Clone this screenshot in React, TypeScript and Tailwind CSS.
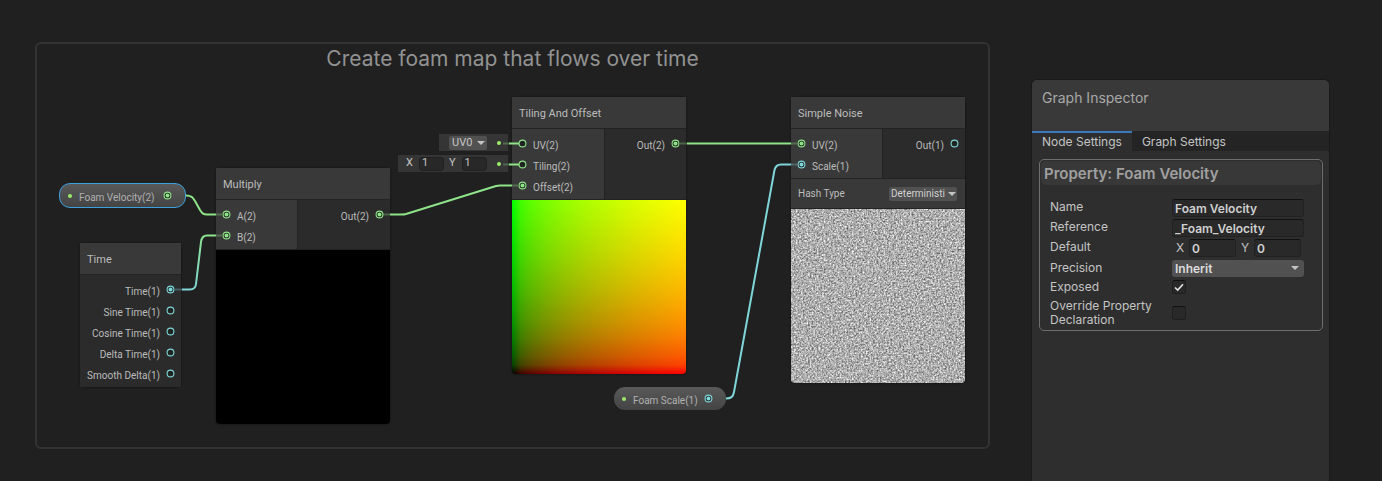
import React from "react";

type Kind = "vec" | "float";

interface PortProps {
  kind: Kind;
  connected?: boolean;
}

interface Slot {
  label: string;
  kind: Kind;
  connected?: boolean;
}

const portColor: Record<Kind, string> = {
  vec: "text-[#8fe388]",
  float: "text-[#7fd6d9]",
};

const timeOutputs: Slot[] = [
  { label: "Time(1)", kind: "float", connected: true },
  { label: "Sine Time(1)", kind: "float" },
  { label: "Cosine Time(1)", kind: "float" },
  { label: "Delta Time(1)", kind: "float" },
  { label: "Smooth Delta(1)", kind: "float" },
];

const edges = [
  { d: "M186 195.500C192 195.500 193 198 195 201L200 210C202 213 203 214.500 207 214.500H216", stroke: "#8fe388" },
  { d: "M182 289.500H190C194 289.500 195.500 288 196 284L201 242C201.500 238 203 235.500 207 235.500H216", stroke: "url(#edge-time)" },
  { d: "M390 214.500H402Q404 214.500 406 214L496 186Q498 185.500 500 185.500H512", stroke: "#8fe388" },
  { d: "M687 143.500H791", stroke: "#8fe388" },
  { d: "M726 398.500C731 398.500 733 397 734 392L774.500 170C775.500 166 777 164.500 781 164.500H791", stroke: "#7fd6d9" },
  { d: "M509 143.500H519M509 164.500H519", stroke: "#8fe388" },
];

const fadedEdges = [
  { d: "M216 214.500H222M216 235.500H222M383 214.500H390M512 185.500H518M680 143.500H687M791 143.500H797M503 143.500H509M503 164.500H509", stroke: "#8fe388" },
  { d: "M175 289.500H182M791 164.500H797", stroke: "#7fd6d9" },
];

const Port: React.FC<PortProps> = ({ kind, connected }) => (
  <svg className={`w-[9px] h-[9px] shrink-0 ${portColor[kind]}`} viewBox="0 0 9 9">
    <circle cx="4.5" cy="4.5" r="3.4" fill="#1f2420" stroke="currentColor" strokeWidth="1.1" />
    {connected && <circle cx="4.5" cy="4.5" r="2" fill="currentColor" />}
  </svg>
);

const Dot = () => <span className="w-1 h-1 shrink-0 rounded-full bg-[#9bec6a]" />;

const Caret = () => (
  <svg className="w-2 h-1 shrink-0 pointer-events-none" viewBox="0 0 8 4">
    <path d="M0 0h8L4 4z" fill="#c4c4c4" />
  </svg>
);

const InputSlot: React.FC<{ slot: Slot }> = ({ slot }) => (
  <li className="flex items-center gap-[6px] h-[21px] pl-[6px]">
    <Port kind={slot.kind} connected={slot.connected} />
    <span className="pt-1">{slot.label}</span>
  </li>
);

const OutputSlot: React.FC<{ slot: Slot }> = ({ slot }) => (
  <li className="flex items-center justify-end gap-[6px] h-[21px] pr-[6px] whitespace-nowrap">
    <span className="pt-1">{slot.label}</span>
    <Port kind={slot.kind} connected={slot.connected} />
  </li>
);

interface NodeProps {
  title: string;
  place: string;
  inputs?: Slot[];
  inputsWidth?: string;
  outputs: Slot[];
  children?: React.ReactNode;
}

const GraphNode: React.FC<NodeProps> = ({ title, place, inputs, inputsWidth, outputs, children }) => (
  <section className={`absolute flex flex-col gap-px bg-[#232323] text-[#bcbcbc] text-[10px] leading-[14px] rounded-sm shadow-[0_0_1px_1px_#1a1a1a] ${place}`}>
    <h2 className="h-[31px] px-[7px] bg-[#393939] text-[11px] leading-[34px]">{title}</h2>
    <div className="flex gap-px">
      {inputs && (
        <ul className={`pt-1 pb-[3px] bg-[#393939] ${inputsWidth}`}>
          {inputs.map((slot) => (
            <InputSlot key={slot.label} slot={slot} />
          ))}
        </ul>
      )}
      <ul className="flex-1 pt-1 pb-[3px] bg-[#2b2b2b]">
        {outputs.map((slot) => (
          <OutputSlot key={slot.label} slot={slot} />
        ))}
      </ul>
    </div>
    {children}
  </section>
);

const SlotField: React.FC<{ label: string }> = ({ label }) => (
  <label className="flex items-center gap-[6px]">
    {label}
    <input
      type="text"
      defaultValue="1"
      className="w-[25px] h-[14px] px-[2px] rounded-[3px] bg-[#282828] border border-[#212121] text-[11px]"
    />
  </label>
);

// white noise, softened and then shifted to a light grey range
const NoisePreview = () => (
  <svg className="w-full h-[174px] rounded-b-sm" role="img" aria-label="Noise preview">
    <filter id="noise" x="-5%" y="-5%" width="110%" height="110%" colorInterpolationFilters="sRGB">
      <feTurbulence type="fractalNoise" baseFrequency="0.57" numOctaves="3" seed="4" />
      <feColorMatrix values="1 0 0 0 0  1 0 0 0 0  1 0 0 0 0  0 0 0 0 1" />
      <feGaussianBlur stdDeviation="0.7" />
      <feColorMatrix values="0.9 0 0 0 0.23  0.9 0 0 0 0.23  0.9 0 0 0 0.23  0 0 0 0 1" />
    </filter>
    <rect width="100%" height="100%" filter="url(#noise)" />
  </svg>
);

const Graph = () => (
  <main className="relative flex-1 min-w-[1000px] font-['Roboto','Inter',sans-serif]">
    <div className="absolute left-[35px] top-[42px] w-[955px] h-[407px] border-2 border-[#333333] rounded-md">
      <h1 className="text-center font-['Inter',sans-serif] text-[21px] leading-[30px] text-[#929292]">
        Create foam map that flows over time
      </h1>
    </div>

    <div className="absolute left-[59px] top-[183px] flex items-center w-[127px] h-[25px] pl-[8px] pr-[13px] rounded-[11px] border border-[#3d9fdc] bg-linear-to-b from-[#595959] to-[#444444] text-[10px] text-[#b0b0b0] whitespace-nowrap">
      <Dot />
      <span className="flex-1 pl-[7px] pt-1">Foam Velocity(2)</span>
      <Port kind="vec" connected />
    </div>

    <div className="absolute left-[614px] top-[387px] flex items-center w-[112px] h-[23px] pl-[8px] pr-[13px] rounded-[11px] bg-linear-to-b from-[#595959] to-[#444444] text-[10px] text-[#b0b0b0] whitespace-nowrap">
      <Dot />
      <span className="flex-1 pl-[7px] pt-1">Foam Scale(1)</span>
      <Port kind="float" connected />
    </div>

    <GraphNode title="Time" place="left-[80px] top-[243px] w-[101px]" outputs={timeOutputs} />

    <GraphNode
      title="Multiply"
      place="left-[216px] top-[168px] w-[174px]"
      inputsWidth="w-[81px]"
      inputs={[
        { label: "A(2)", kind: "vec", connected: true },
        { label: "B(2)", kind: "vec", connected: true },
      ]}
      outputs={[{ label: "Out(2)", kind: "vec", connected: true }]}
    >
      <div className="h-[174px] bg-black rounded-b-sm" />
    </GraphNode>

    <div className="absolute left-[439px] top-[134px] flex items-center justify-between w-[69px] h-[17px] pl-[10px] pr-[7px] bg-[#353535] text-[11px] text-[#c4c4c4]">
      <div className="relative flex items-center">
        <select
          aria-label="UV channel"
          className="w-[38px] h-[14px] pl-[3px] appearance-none rounded-[2px] bg-[#515151] leading-[14px]"
        >
          <option>UV0</option>
        </select>
        <span className="absolute right-[4px] flex w-[6px] pointer-events-none">
          <Caret />
        </span>
      </div>
      <Dot />
    </div>

    <div className="absolute left-[398px] top-[155px] flex items-center justify-between w-[110px] h-[17px] pl-[8px] pr-[7px] bg-[#353535] text-[11px] text-[#c4c4c4]">
      <div className="flex items-center gap-[5px]">
        <SlotField label="X" />
        <SlotField label="Y" />
      </div>
      <Dot />
    </div>

    <GraphNode
      title="Tiling And Offset"
      place="left-[512px] top-[97px] w-[174px]"
      inputsWidth="w-[92px]"
      inputs={[
        { label: "UV(2)", kind: "vec" },
        { label: "Tiling(2)", kind: "vec" },
        { label: "Offset(2)", kind: "vec", connected: true },
      ]}
      outputs={[{ label: "Out(2)", kind: "vec", connected: true }]}
    >
      <div className="h-[174px] rounded-b-sm bg-blend-screen bg-[linear-gradient(to_right,#000_0%,#410000_5%,#5a0000_10%,#7b0000_20%,#940000_30%,#a80000_40%,#ba0000_50%,#ca0000_60%,#d90000_70%,#e60000_80%,#f30000_90%,#f00_100%),linear-gradient(to_top,#000_0%,#004100_5%,#005a00_10%,#007b00_20%,#009400_30%,#00a800_40%,#00ba00_50%,#00ca00_60%,#00d900_70%,#00e600_80%,#00f300_90%,#0f0_100%)]" />
    </GraphNode>

    <GraphNode
      title="Simple Noise"
      place="left-[791px] top-[97px] w-[174px]"
      inputsWidth="w-[91px]"
      inputs={[
        { label: "UV(2)", kind: "vec", connected: true },
        { label: "Scale(1)", kind: "float", connected: true },
      ]}
      outputs={[{ label: "Out(1)", kind: "float" }]}
    >
      <div className="flex items-center justify-between h-[29px] pl-[7px] pr-[8px] bg-[#393939]">
        <label htmlFor="hash-type">Hash Type</label>
        <div className="relative flex items-center">
          <select
            id="hash-type"
            className="w-[68px] h-[14px] pl-[2px] appearance-none rounded-[2px] bg-[#515151] text-[#d0d0d0] leading-[14px]"
          >
            <option>Deterministi</option>
          </select>
          <span className="absolute right-[3px] flex w-[6px] pointer-events-none">
            <Caret />
          </span>
        </div>
      </div>
      <NoisePreview />
    </GraphNode>

    <svg className="absolute inset-0 w-full h-full pointer-events-none" fill="none" strokeWidth="2">
      <linearGradient id="edge-time" x1="182" y1="289" x2="216" y2="235" gradientUnits="userSpaceOnUse">
        <stop stopColor="#7fd6d9" />
        <stop offset="1" stopColor="#8fe388" />
      </linearGradient>
      {edges.map((edge) => (
        <path key={edge.d} d={edge.d} stroke={edge.stroke} />
      ))}
      {fadedEdges.map((edge) => (
        <path key={edge.d} d={edge.d} stroke={edge.stroke} strokeOpacity="0.3" />
      ))}
    </svg>
  </main>
);

const labelClass = "pb-[2px]";

const fieldClass =
  "h-[18px] px-[2px] rounded-[3px] bg-[#292929] border border-[#222222] border-t-[#111111] font-semibold text-[#d0d0d0]";

const Inspector = () => (
  <aside className="flex flex-col w-[297px] mt-[80px] mr-[53px] shrink-0 rounded-t-[5px] bg-[#2e2e2e] text-[12px] leading-[14px] text-[#c4c4c4] shadow-[0_0_0_1px_#191919]">
    <h2 className="h-[51px] px-[10px] pt-[10px] rounded-t-[5px] bg-[#393939] text-[14px] leading-4 text-[#a8a8a8]">
      Graph Inspector
    </h2>
    <div role="tablist" className="flex h-[20px] bg-[#242424]">
      <button role="tab" aria-selected="true" className="px-[10px] bg-[#2e2e2e] border-t-2 border-[#3a79bb]">
        Node Settings
      </button>
      <button role="tab" aria-selected="false" className="px-[10px] pt-[2px]">
        Graph Settings
      </button>
    </div>

    <form className="ml-[7px] mr-[6px] mt-2 p-px border border-[#6e6e6e] rounded-[5px]">
      <h3 className="h-6 px-[3px] rounded-[5px] bg-[#383838] text-[15px] leading-[26px] font-semibold text-[#a0a0a0]">
        Property: Foam Velocity
      </h3>
      <div className="grid grid-cols-[122px_132px] grid-rows-[20px_20px_20px_20px_18px_33px] items-center pl-[9px] pt-[13px]">
        <label htmlFor="name" className={labelClass}>Name</label>
        <input id="name" type="text" defaultValue="Foam Velocity" className={fieldClass} />

        <label htmlFor="reference" className={labelClass}>Reference</label>
        <input id="reference" type="text" defaultValue="_Foam_Velocity" className={fieldClass} />

        <span className={labelClass}>Default</span>
        <div className="flex items-center justify-between pl-[4px] pr-[3px]">
          <label htmlFor="default-x">X</label>
          <input id="default-x" type="text" defaultValue="0" className={`w-[47px] ${fieldClass}`} />
          <label htmlFor="default-y">Y</label>
          <input id="default-y" type="text" defaultValue="0" className={`w-[47px] ${fieldClass}`} />
        </div>

        <label htmlFor="precision">Precision</label>
        <div className="relative flex items-center">
          <select
            id="precision"
            className="w-full h-[17px] pl-[3px] appearance-none rounded-[3px] bg-[#515151] font-semibold text-[#dcdcdc] leading-[17px]"
          >
            <option>Inherit</option>
          </select>
          <span className="absolute right-[5px] flex pointer-events-none">
            <Caret />
          </span>
        </div>

        <label htmlFor="exposed">Exposed</label>
        <CheckBox id="exposed" defaultChecked />

        <label htmlFor="override">
          Override Property Declaration
        </label>
        <CheckBox id="override" />
      </div>
    </form>
  </aside>
);

const CheckBox: React.FC<{ id: string; defaultChecked?: boolean }> = ({ id, defaultChecked }) => (
  <div className="relative flex w-[14px]">
    <input
      id={id}
      type="checkbox"
      defaultChecked={defaultChecked}
      className="peer w-[14px] h-[14px] appearance-none rounded-[3px] bg-[#292929] border border-[#1f1f1f] border-t-[#111111]"
    />
    <svg
      className="absolute inset-0 w-[14px] h-[14px] pointer-events-none opacity-0 peer-checked:opacity-100"
      viewBox="0 0 14 14"
      fill="none"
    >
      <path d="M3 7.500L5.700 10L11 4.200" stroke="#e4e4e4" strokeWidth="1.600" />
    </svg>
  </div>
);

const App = () => (
  <div className="flex min-h-screen overflow-hidden bg-[#202020] font-['Inter',sans-serif]">
    <Graph />
    <Inspector />
  </div>
);

export default App;
